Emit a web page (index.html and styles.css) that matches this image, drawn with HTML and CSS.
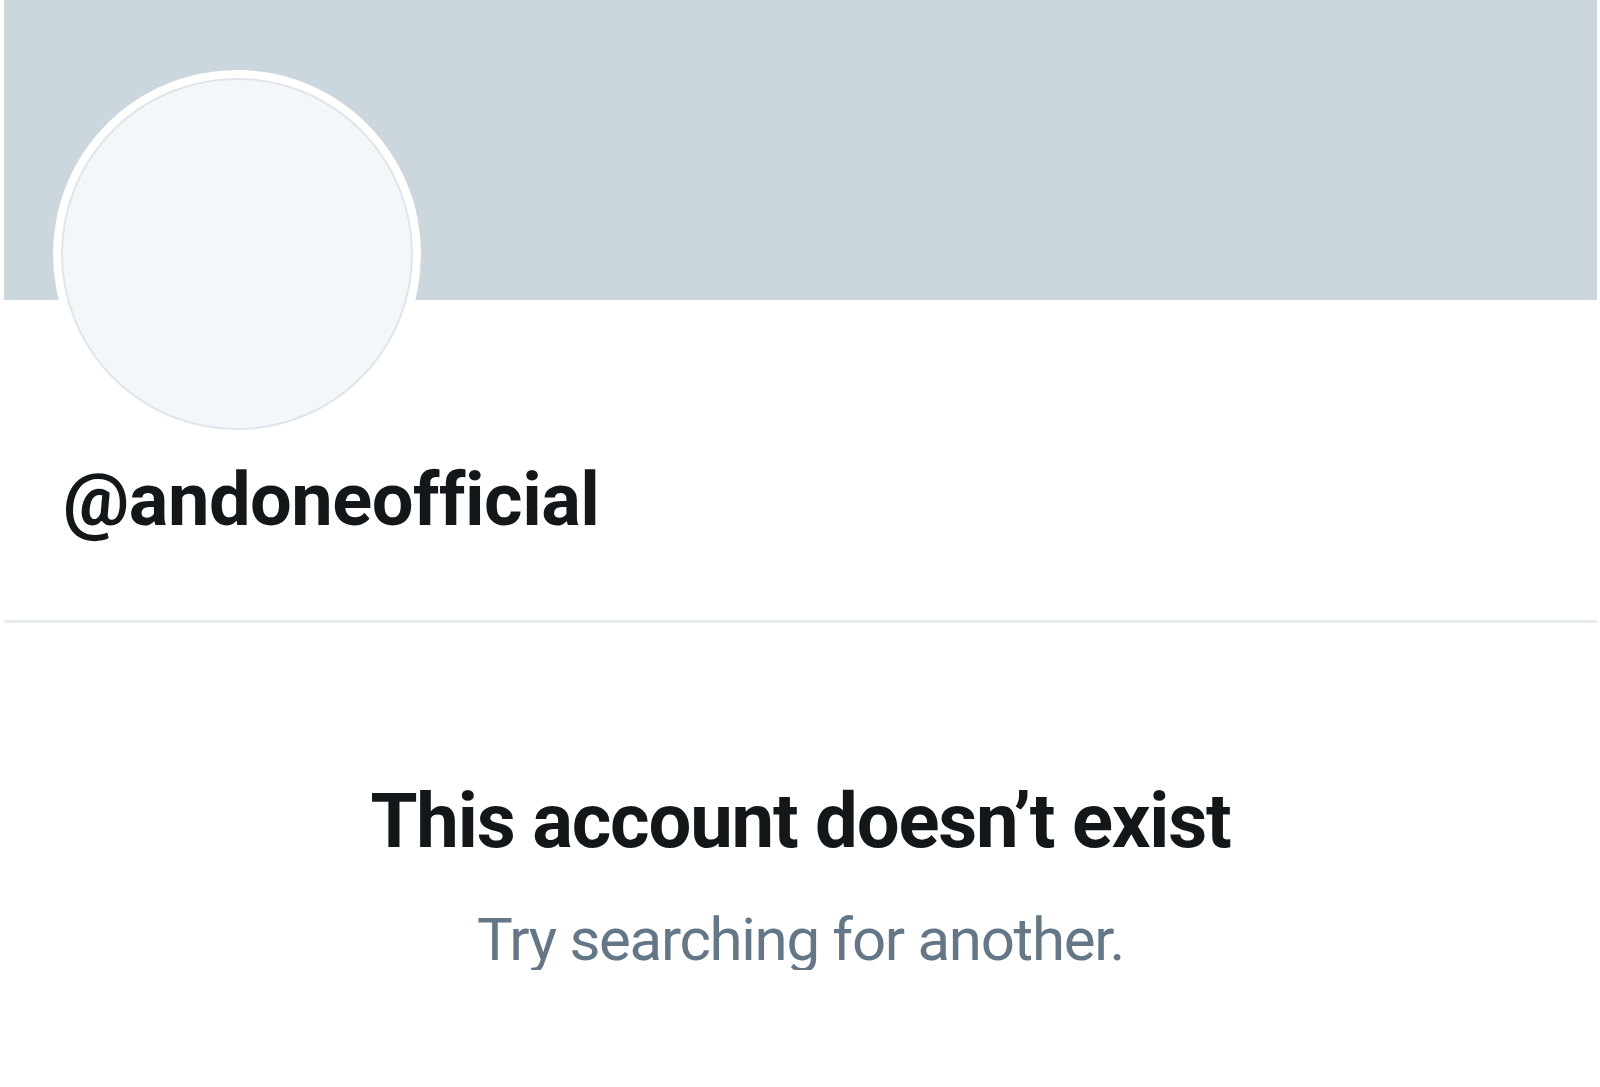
FILE: index.html
```html
<!DOCTYPE html>
<html>
<head>
<meta charset="utf-8">
<link rel="stylesheet" href="styles.css">
</head>
<body>
<div class="page">
  <div class="banner"></div>
  <div class="profile">
    <div class="avatar"><div class="avatar-inner"></div></div>
    <div class="handle">@andoneofficial</div>
  </div>
  <div class="divider"></div>
  <div class="empty">
    <h1 class="title">This account doesn’t exist</h1>
    <p class="subtitle">Try searching for another.</p>
  </div>
</div>
</body>
</html>
```
FILE: styles.css
```css
html, body {
  margin: 0;
  padding: 0;
  background: #ffffff;
}
body {
  font-family: Roboto, "Liberation Sans", sans-serif;
}
.page {
  margin-left: 4px;
  width: 1593px;
}
.banner {
  height: 300px;
  background: #ccd6dd;
}
.profile {
  display: flow-root;
  padding-left: 49px;
  padding-bottom: 83px;
}
.avatar {
  width: 368px;
  height: 368px;
  margin-top: -230px;
  border-radius: 50%;
  background: #ffffff;
  padding: 8px;
  box-sizing: border-box;
}
.avatar-inner {
  width: 100%;
  height: 100%;
  border-radius: 50%;
  border: 2px solid #dfe5ea;
  background: #f4f7fa;
  box-sizing: border-box;
}
.handle {
  margin-top: 25px;
  margin-left: 10px;
  font-size: 74px;
  font-weight: 700;
  letter-spacing: -0.5px;
  color: #14171a;
  line-height: 1;
}
.divider {
  height: 3px;
  background: #e6ecf0;
}
.empty {
  text-align: center;
}
.title {
  margin: 160px 0 0;
  font-size: 76px;
  font-weight: 700;
  letter-spacing: -1.2px;
  color: #14171a;
  line-height: 1;
}
.subtitle {
  margin: 51px 0 0;
  font-size: 60px;
  font-weight: 400;
  letter-spacing: -1.3px;
  color: #657786;
  line-height: 1;
}
```
